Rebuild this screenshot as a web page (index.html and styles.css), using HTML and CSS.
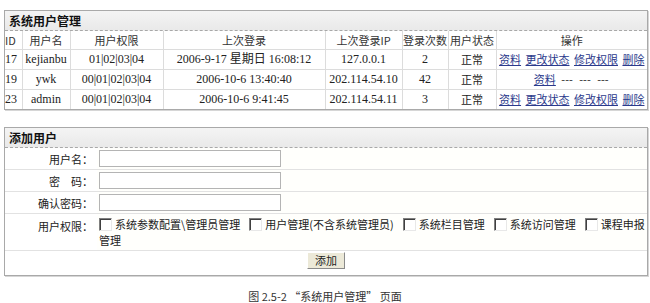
FILE: index.html
```html
<!DOCTYPE html>
<html lang="zh-CN">
<head>
    <meta charset="UTF-8">
    <title>系统用户管理</title>
    <link rel="stylesheet" href="styles.css">
</head>
<body>
    <div class="panel">
        <div class="panel-title">系统用户管理</div>
        <table class="list">
            <colgroup>
                <col style="width:17px">
                <col style="width:48px">
                <col style="width:93px">
                <col style="width:162px">
                <col style="width:77px">
                <col style="width:46px">
                <col style="width:48px">
                <col>
            </colgroup>
            <tr class="head">
                <td class="id">ID</td>
                <td>用户名</td>
                <td>用户权限</td>
                <td>上次登录</td>
                <td>上次登录IP</td>
                <td>登录次数</td>
                <td>用户状态</td>
                <td>操作</td>
            </tr>
            <tr>
                <td class="num id">17</td>
                <td class="num">kejianbu</td>
                <td class="num">01|02|03|04</td>
                <td class="num">2006-9-17 星期日 16:08:12</td>
                <td class="num">127.0.0.1</td>
                <td class="num">2</td>
                <td>正常</td>
                <td class="ops"><a href="#">资料</a> <a href="#">更改状态</a> <a href="#">修改权限</a> <a href="#">删除</a></td>
            </tr>
            <tr>
                <td class="num id">19</td>
                <td class="num">ywk</td>
                <td class="num">00|01|02|03|04</td>
                <td class="num">2006-10-6 13:40:40</td>
                <td class="num">202.114.54.10</td>
                <td class="num">42</td>
                <td>正常</td>
                <td class="ops"><a href="#">资料</a> <span class="dash">---</span> <span class="dash">---</span> <span class="dash">---</span></td>
            </tr>
            <tr>
                <td class="num id">23</td>
                <td class="num">admin</td>
                <td class="num">00|01|02|03|04</td>
                <td class="num">2006-10-6 9:41:45</td>
                <td class="num">202.114.54.11</td>
                <td class="num">3</td>
                <td>正常</td>
                <td class="ops"><a href="#">资料</a> <a href="#">更改状态</a> <a href="#">修改权限</a> <a href="#">删除</a></td>
            </tr>
        </table>
    </div>

    <div class="panel second">
        <div class="panel-title">添加用户</div>
        <table class="form">
            <tr>
                <td class="label">用户名：</td>
                <td class="field"><input type="text" class="txt"></td>
            </tr>
            <tr>
                <td class="label">密　码：</td>
                <td class="field"><input type="password" class="txt"></td>
            </tr>
            <tr>
                <td class="label">确认密码：</td>
                <td class="field"><input type="password" class="txt"></td>
            </tr>
            <tr class="rights">
                <td class="label">用户权限：</td>
                <td class="field"><input type="checkbox" class="chk"><span class="opt">系统参数配置\管理员管理</span><input type="checkbox" class="chk"><span class="opt">用户管理(不含系统管理员)</span><input type="checkbox" class="chk"><span class="opt">系统栏目管理</span><input type="checkbox" class="chk"><span class="opt">系统访问管理</span><input type="checkbox" class="chk"><span class="opt last">课程申报</span><br><span>管理</span></td>
            </tr>
            <tr class="submit">
                <td colspan="2"><input type="button" value="添加" class="btn"></td>
            </tr>
        </table>
    </div>

    <p class="caption">图 2.5-2 “系统用户管理” 页面</p>
</body>
</html>
```

FILE: styles.css
```css
body{
    margin: 0;
    padding-top: 10px;
    background: #fff;
    color: #222;
    font-family: "Noto Sans CJK SC", sans-serif;
    font-size: 11px;
}
.panel{
    margin-left: 4px;
    width: 642px;
    border: 1px solid #a9a9a9;
    box-shadow: 1px 1px 0 #d6d6d6;
}
.second{
    margin-top: 17px;
}
.panel-title{
    height: 19px;
    line-height: 19px;
    padding-left: 4px;
    background: linear-gradient(#f4f4f4, #e9e9e9);
    border-bottom: 1px dashed #a8a8a8;
    font-size: 12px;
    font-weight: bold;
    color: #111;
}
table{
    width: 100%;
    border-collapse: collapse;
    table-layout: fixed;
}
td{
    padding: 0;
}
.list td{
    height: 19px;
    line-height: 19px;
    border-top: 1px solid #dcdcdc;
    border-left: 1px solid #dcdcdc;
    text-align: center;
    white-space: nowrap;
    overflow: hidden;
}
.list .head td{
    height: 18px;
    line-height: 18px;
    border-top: 0;
    color: #333;
}
.list td.id{
    border-left: 0;
    text-align: left;
}
.num{
    font-family: "Liberation Serif", "Noto Sans CJK SC", serif;
    font-size: 12px;
}
.ops a{
    color: #2b3a8c;
    margin: 0 1px;
}
.dash{
    margin: 0 2px;
}

.form td{
    border-top: 1px solid #e2e2e2;
}
.form tr:first-child td{
    border-top: 0;
}
.form .label{
    width: 88px;
    padding-right: 4px;
    height: 21px;
    text-align: right;
    color: #222;
}
.form .field{
    padding-left: 2px;
    background: #fffffc;
}
.txt{
    display: block;
    width: 182px;
    height: 17px;
    box-sizing: border-box;
    margin: 0;
    border: 1px solid #b4b4b4;
    background: #fff;
}
.rights td{
    height: 37px;
    line-height: 16px;
    padding-top: 2px;
    padding-bottom: 2px;
    vertical-align: top;
    box-sizing: border-box;
}
.rights .label{
    padding-top: 4px;
}
.opt{
    margin-right: 9px;
}
.opt.last{
    margin-right: 0;
}
.chk{
    -webkit-appearance: none;
    appearance: none;
    width: 13px;
    height: 13px;
    margin: 0 3px 0 0;
    vertical-align: -2px;
    border: 1px solid;
    border-color: #7f7f7f #e8e8e8 #e8e8e8 #7f7f7f;
    box-shadow: inset 1px 1px 0 #404040;
    background: #fff;
}
.submit td{
    height: 24px;
    text-align: center;
}
.btn{
    width: 38px;
    height: 17px;
    padding: 0;
    margin: 0 0 5px 0;
    font-family: "Noto Sans CJK SC", sans-serif;
    font-size: 11px;
    line-height: 15px;
    color: #222;
    background: #ece9d8;
    border: 1px solid;
    border-color: #fff #8a8a8a #8a8a8a #fff;
}
.caption{
    margin: 14px 0 0 0;
    line-height: 12px;
    text-align: center;
    font-size: 11px;
    color: #333;
}
```
